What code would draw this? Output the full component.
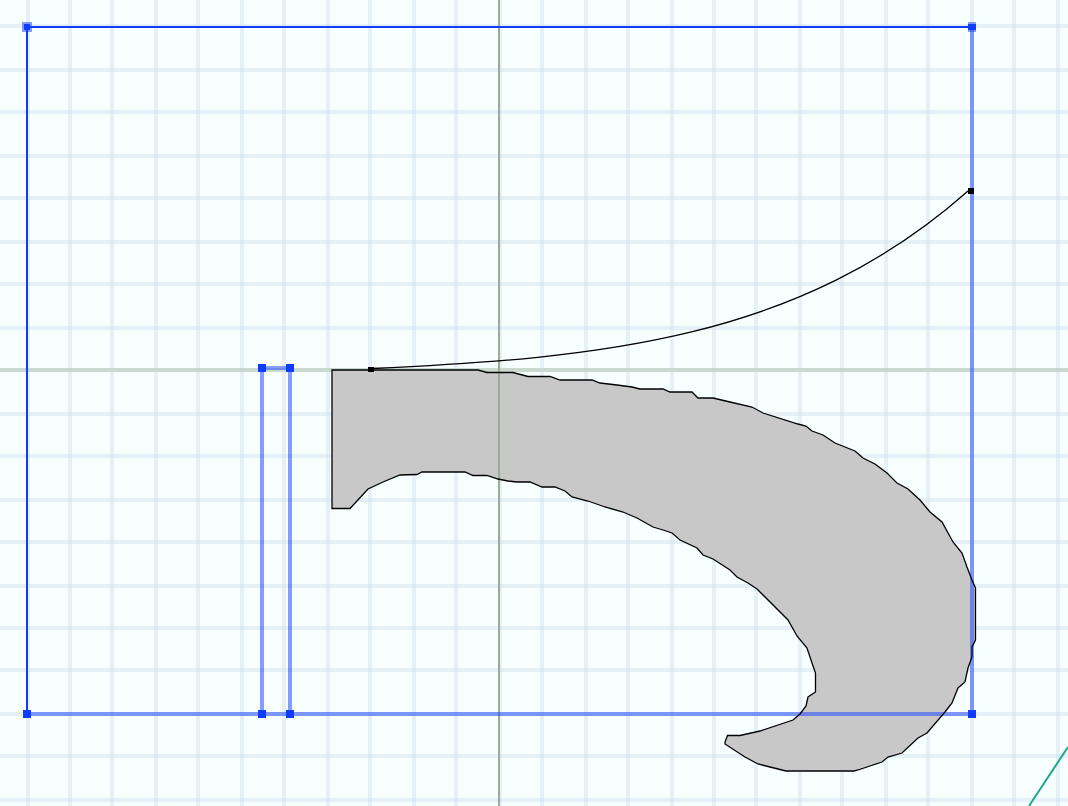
const GRID_X = [26, 68, 110, 154, 196, 240, 282, 326, 368, 412, 454, 498, 540, 584, 626, 670, 712, 754, 798, 840, 884, 926, 970, 1012, 1056];
const GRID_Y = [24, 68, 110, 154, 196, 240, 282, 326, 368, 412, 454, 498, 540, 584, 626, 668, 712, 754, 798];

// glyph outline, traced clockwise from the top left corner
const OUTLINE = `332,370 478,370 487,372.5 513,372.5 528,376.5 550,376.5 560,380 592,380 600,383 617,385 632,387 640,389 663,389 670,392 692,392
698,398 713,398 730,402 752,407 763,413 798,424 806,426 812,431 823,435 835,443 855,451 863,458 875,464 887,473 897,483 908,489 920,500 930,512
942,522 953,542 962,553 967,567 972,580 975.5,588 975.5,640 972,647 972,657 968,668 965,682 958,688 952,703 945,712 927,733 918,738 902,753
888,757 882,762 858,770 854,771 786,771 778,769 758,764 745,757 725,744 725,742 727.5,735.5 740,735.5 760,731 793,720 800,714 806,706 808,697
815.5,692 815.5,673 812,663 807,648 797,636 788,620 757,589 748,583 737,577 730,570 713,559 703,555 697,548 680,540 672,533 663,530 653,527
637,518 623,512 605,507 588,501 572,497 565,491 555,487 542,487 530,482 517,482 508,481 498,479 487,475.5 473,475.5 465,472 422,472 417,474.5
400,475 383,482 368,489 350,508.5 332,508.5`;

const Handle = ({ x, y, w = 8, h = 8 }) => <rect x={x} y={y} width={w} height={h} fill="#0f3cff" />;

export default function App() {
  return (
    <div className="w-[1068px] h-[806px] overflow-hidden bg-[#f8ffff]">
      <svg width="1068" height="806" viewBox="0 0 1068 806" className="block">
        {/* background grid */}
        <g fill="#d2e2ef" fillOpacity="0.5">
          {GRID_X.map((x) => <rect key={x} x={x} y="0" width="4" height="806" />)}
          {GRID_Y.map((y) => <rect key={y} x="0" y={y} width="1068" height="4" />)}
        </g>

        <rect x="0" y="368" width="1068" height="4" fill="#c9d9d0" />

        <path d="M1068 747 L1029 806" stroke="#1fa78f" strokeWidth="2" fill="none" />

        <polygon points={OUTLINE} fill="#c8c8c8" />

        <rect x="498" y="0" width="2" height="806" fill="#9aab98" />

        {/* glyph bounds and advance lines */}
        <g fill="#0f3cff" fillOpacity="0.5">
          <rect x="970" y="28" width="4" height="684" />
          <rect x="28" y="712" width="944" height="4" />
          <rect x="260" y="370" width="4" height="342" />
          <rect x="288" y="370" width="4" height="342" />
          <rect x="264" y="366" width="24" height="4" />
          <rect x="22" y="22" width="10" height="10" />
          <rect x="968" y="22" width="8" height="10" />
        </g>
        <rect x="28" y="26" width="942" height="2" fill="#0f3cff" />
        <rect x="26" y="28" width="2" height="686" fill="#0f3cff" />

        <Handle x={24} y={24} w={6} h={6} />
        <Handle x={968} y={24} h={6} />
        <Handle x={23} y={710} />
        <Handle x={258} y={710} />
        <Handle x={286} y={710} />
        <Handle x={968} y={710} />
        <Handle x={258} y={364} />
        <Handle x={286} y={364} />

        {/* outline on top of everything */}
        <polygon points={OUTLINE} fill="none" stroke="#000" strokeWidth="1.3" />
        <path d="M372 368.5 C600 358 800 340 968 191" fill="none" stroke="#000" strokeWidth="1.3" />
        <rect x="368" y="367" width="6" height="5" fill="#000" />
        <rect x="968" y="188" width="6" height="6" fill="#000" />
      </svg>
    </div>
  );
}
